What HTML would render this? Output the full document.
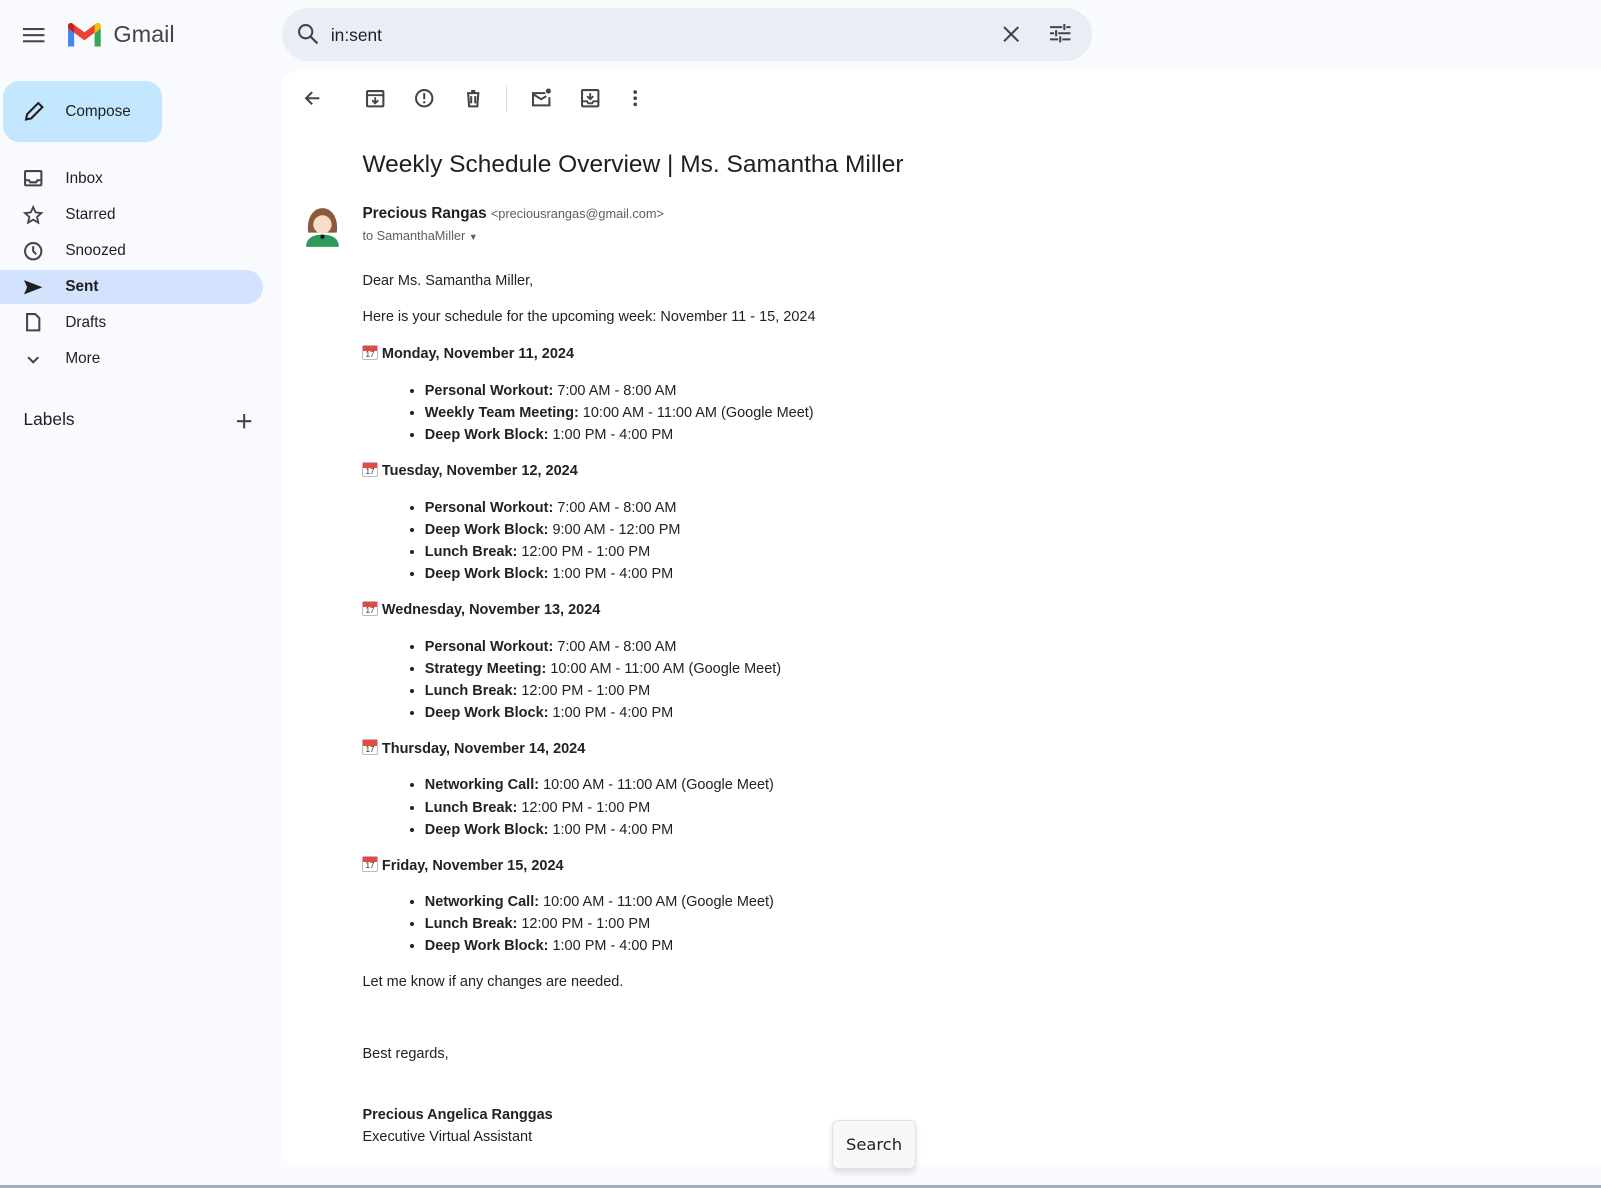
<!DOCTYPE html>
<html><head><meta charset="utf-8">
<style>
html{zoom:1.0211}
body{margin:0;width:1568px;height:1163px;background:#f8fafd;font-family:"Liberation Sans",Arial,sans-serif;color:#1f1f1f;position:relative;overflow:hidden}
.abs{position:absolute}
.nav{position:absolute;left:0;width:258px;height:34px;display:flex;align-items:center;font-size:15px;color:#1f1f1f}
.nav svg{position:absolute;left:23px}
.nav span{position:absolute;left:64px}
.tb{position:absolute;top:86px}
.body{position:absolute;left:355px;top:264px;font-size:14.2px;line-height:21.6px;color:#222}
.body p{margin:0 0 14.4px}
.body ul{margin:0 0 13.6px;padding-left:61px}
.body li{list-style:disc}
.cal{display:inline-block;width:15px;height:15px;vertical-align:-2px;margin-right:4px;border:1px solid #bbb;border-radius:2px;background:#fff;position:relative;box-sizing:border-box}
.cal:before{content:"";position:absolute;left:0;right:0;top:0;height:5px;background:#e34b3f}
.cal:after{content:"17";position:absolute;left:2px;top:4px;font-size:8px;line-height:9px;color:#333}
</style></head><body>
<svg class="abs" style="left:23px;top:26px" width="22" height="16"><rect y="1" width="21" height="2" fill="#444"/><rect y="7" width="21" height="2" fill="#444"/><rect y="13" width="21" height="2" fill="#444"/></svg>
<svg class="abs" style="left:65px;top:22px" width="36" height="26" viewBox="0 0 36 26">
<path d="M2 6v18h6V11z" fill="#4285f4"/><path d="M28 11v13h6V6z" fill="#34a853"/>
<path d="M2 6l16 12 16-12V4c0-3-3-4-5-2L18 10 7 2C5 0 2 1 2 4z" fill="#ea4335"/>
<path d="M28 4v7l6-5V4c0-3-3-4-5-2z" fill="#fbbc04"/><path d="M2 4v2l6 5V4L7 2C5 0 2 1 2 4z" fill="#c5221f"/></svg>
<div class="abs" style="left:111px;top:21px;font-size:23px;color:#444">Gmail</div>
<div class="abs" style="left:276px;top:8px;width:793px;height:52px;border-radius:26px;background:#e9eef6"></div>
<svg class="abs" style="left:291px;top:23px" width="22" height="22"><circle cx="8.5" cy="8.5" r="6.5" fill="none" stroke="#444" stroke-width="2"/><path d="M13 13l7 7" stroke="#444" stroke-width="2.2"/></svg>
<div class="abs" style="left:324px;top:24px;font-size:17px;color:#1f1f1f">in:sent</div>
<svg class="abs" style="left:981px;top:24px" width="18" height="18"><path d="M2 2l14 14M16 2L2 16" stroke="#444" stroke-width="2"/></svg>
<svg class="abs" style="left:1027px;top:23px" width="22" height="20"><path d="M1 4h12M17 4h4M1 10h4M9 10h12M1 16h8M13 16h8" stroke="#444" stroke-width="2"/><path d="M15 1v6M7 7v6M11 13v6" stroke="#444" stroke-width="2"/></svg>
<div class="abs" style="left:3px;top:79px;width:156px;height:60px;border-radius:16px;background:#c2e7ff"></div>
<svg class="abs" style="left:23px;top:98px" width="22" height="22"><path d="M3 19l1-5L15 3l4 4L8 18z" fill="none" stroke="#1f1f1f" stroke-width="2"/></svg>
<div class="abs" style="left:64px;top:101px;font-size:15px;color:#1f1f1f">Compose</div>
<div class="nav" style="top:158px"><svg width="20" height="20"><rect x="2" y="3" width="16" height="14" rx="1" fill="none" stroke="#444" stroke-width="2"/><path d="M2 12h4l1 2h6l1-2h4" fill="none" stroke="#444" stroke-width="2"/></svg><span>Inbox</span></div>
<div class="nav" style="top:194px"><svg width="20" height="20"><path d="M10 2l2.4 5.3 5.6.6-4.2 3.8 1.2 5.6L10 14.4 5 17.3l1.2-5.6L2 7.9l5.6-.6z" fill="none" stroke="#444" stroke-width="1.8"/></svg><span>Starred</span></div>
<div class="nav" style="top:229px"><svg width="20" height="20"><circle cx="10" cy="10" r="8" fill="none" stroke="#444" stroke-width="2"/><path d="M10 5v5l3 3" fill="none" stroke="#444" stroke-width="2"/></svg><span>Snoozed</span></div>
<div class="nav" style="top:264px;background:#d3e3fd;border-radius:0 17px 17px 0;font-weight:bold"><svg width="20" height="20"><path d="M1 3l18 7-18 7 3-7z" fill="#1f1f1f"/></svg><span>Sent</span></div>
<div class="nav" style="top:299px"><svg width="20" height="20"><path d="M4 2h8l4 4v12H4z" fill="none" stroke="#444" stroke-width="2"/></svg><span>Drafts</span></div>
<div class="nav" style="top:335px"><svg width="20" height="20"><path d="M5 8l5 5 5-5" fill="none" stroke="#444" stroke-width="2"/></svg><span>More</span></div>
<div class="abs" style="left:23px;top:401px;font-size:17px;color:#1f1f1f">Labels</div>
<svg class="abs" style="left:231px;top:404px" width="16" height="16"><path d="M8 1v14M1 8h14" stroke="#444" stroke-width="2"/></svg>
<div class="abs" style="left:276px;top:70px;width:1300px;height:1073px;background:#fff;border-radius:16px 0 0 16px"></div>
<div class="abs" style="left:0;top:1161px;width:1568px;height:2px;background:#a5acb8"></div>
<svg class="tb" style="left:296px" width="20" height="20"><path d="M17 10H4M10 4l-6 6 6 6" fill="none" stroke="#444" stroke-width="2"/></svg>
<svg class="tb" style="left:357px" width="20" height="20"><rect x="2" y="3" width="16" height="15" rx="1" fill="none" stroke="#444" stroke-width="2"/><path d="M2 7h16M10 9v6M7 12l3 3 3-3" fill="none" stroke="#444" stroke-width="1.8"/></svg>
<svg class="tb" style="left:405px" width="20" height="20"><circle cx="10" cy="10" r="8" fill="none" stroke="#444" stroke-width="2"/><path d="M10 5v6" stroke="#444" stroke-width="2"/><circle cx="10" cy="14" r="1.2" fill="#444"/></svg>
<svg class="tb" style="left:453px" width="20" height="20"><path d="M4 5h12M8 3h4M5 5l1 13h8l1-13M8 8v7M12 8v7" fill="none" stroke="#444" stroke-width="2"/></svg>
<div class="abs" style="left:496px;top:84px;width:1px;height:26px;background:#ddd"></div>
<svg class="tb" style="left:520px" width="20" height="20"><path d="M14 5H2v12h16V9" fill="none" stroke="#444" stroke-width="2"/><path d="M2 6l8 5 5-3" fill="none" stroke="#444" stroke-width="2"/><circle cx="17" cy="3" r="2.5" fill="#444"/></svg>
<svg class="tb" style="left:568px" width="20" height="20"><rect x="2" y="2" width="16" height="16" rx="1" fill="none" stroke="#444" stroke-width="2"/><path d="M10 5v6M7 8l3 3 3-3M2 13h5l1 2h4l1-2h5" fill="none" stroke="#444" stroke-width="1.8"/></svg>
<svg class="tb" style="left:612px" width="20" height="20"><circle cx="10" cy="4" r="1.8" fill="#444"/><circle cx="10" cy="10" r="1.8" fill="#444"/><circle cx="10" cy="16" r="1.8" fill="#444"/></svg>
<div class="abs" style="left:355px;top:148px;font-size:24px;color:#1f1f1f">Weekly Schedule Overview | Ms. Samantha Miller</div>
<svg class="abs" style="left:294px;top:198px" width="44" height="44"><circle cx="22" cy="22" r="22" fill="#fff"/><path d="M8 30C6 14 14 6 22 6s16 8 14 24z" fill="#8a5a3c"/><circle cx="22" cy="22" r="9" fill="#f7dcc8"/><path d="M6 44c0-8 6-12 16-12s16 4 16 12z" fill="#2e9a5a"/><circle cx="22" cy="34" r="2" fill="#111"/></svg>
<div class="abs" style="left:355px;top:201px;font-size:15px"><b style="color:#1f1f1f">Precious Rangas</b> <span style="font-size:12.5px;color:#5e5e5e">&lt;preciousrangas@gmail.com&gt;</span></div>
<div class="abs" style="left:355px;top:223px;font-size:12.5px;color:#5e5e5e">to SamanthaMiller <span style="font-size:9px">▼</span></div>
<div class="body">
<p>Dear Ms. Samantha Miller,</p>
<p>Here is your schedule for the upcoming week: November 11 - 15, 2024</p>
<p><span class="cal"></span><b>Monday, November 11, 2024</b></p>
<ul><li><b>Personal Workout:</b> 7:00 AM - 8:00 AM</li><li><b>Weekly Team Meeting:</b> 10:00 AM - 11:00 AM (Google Meet)</li><li><b>Deep Work Block:</b> 1:00 PM - 4:00 PM</li></ul>
<p><span class="cal"></span><b>Tuesday, November 12, 2024</b></p>
<ul><li><b>Personal Workout:</b> 7:00 AM - 8:00 AM</li><li><b>Deep Work Block:</b> 9:00 AM - 12:00 PM</li><li><b>Lunch Break:</b> 12:00 PM - 1:00 PM</li><li><b>Deep Work Block:</b> 1:00 PM - 4:00 PM</li></ul>
<p><span class="cal"></span><b>Wednesday, November 13, 2024</b></p>
<ul><li><b>Personal Workout:</b> 7:00 AM - 8:00 AM</li><li><b>Strategy Meeting:</b> 10:00 AM - 11:00 AM (Google Meet)</li><li><b>Lunch Break:</b> 12:00 PM - 1:00 PM</li><li><b>Deep Work Block:</b> 1:00 PM - 4:00 PM</li></ul>
<p><span class="cal"></span><b>Thursday, November 14, 2024</b></p>
<ul><li><b>Networking Call:</b> 10:00 AM - 11:00 AM (Google Meet)</li><li><b>Lunch Break:</b> 12:00 PM - 1:00 PM</li><li><b>Deep Work Block:</b> 1:00 PM - 4:00 PM</li></ul>
<p><span class="cal"></span><b>Friday, November 15, 2024</b></p>
<ul><li><b>Networking Call:</b> 10:00 AM - 11:00 AM (Google Meet)</li><li><b>Lunch Break:</b> 12:00 PM - 1:00 PM</li><li><b>Deep Work Block:</b> 1:00 PM - 4:00 PM</li></ul>
<p>Let me know if any changes are needed.</p>
</div>
<div class="abs" style="left:355px;top:1024px;font-size:14.2px;color:#222">Best regards,</div>
<div class="abs" style="left:355px;top:1081px;font-size:14.2px;line-height:21.6px;color:#222"><b>Precious Angelica Ranggas</b><br>Executive Virtual Assistant</div>
<div class="abs" style="left:815px;top:1097px;width:80px;height:46px;border:1px solid #e2e2e2;border-radius:6px;background:#f8f8f8;box-shadow:0 3px 6px rgba(0,0,0,.12);font-family:'DejaVu Sans',sans-serif;font-size:16px;color:#222;display:flex;align-items:center;justify-content:center">Search</div>
</body></html>
